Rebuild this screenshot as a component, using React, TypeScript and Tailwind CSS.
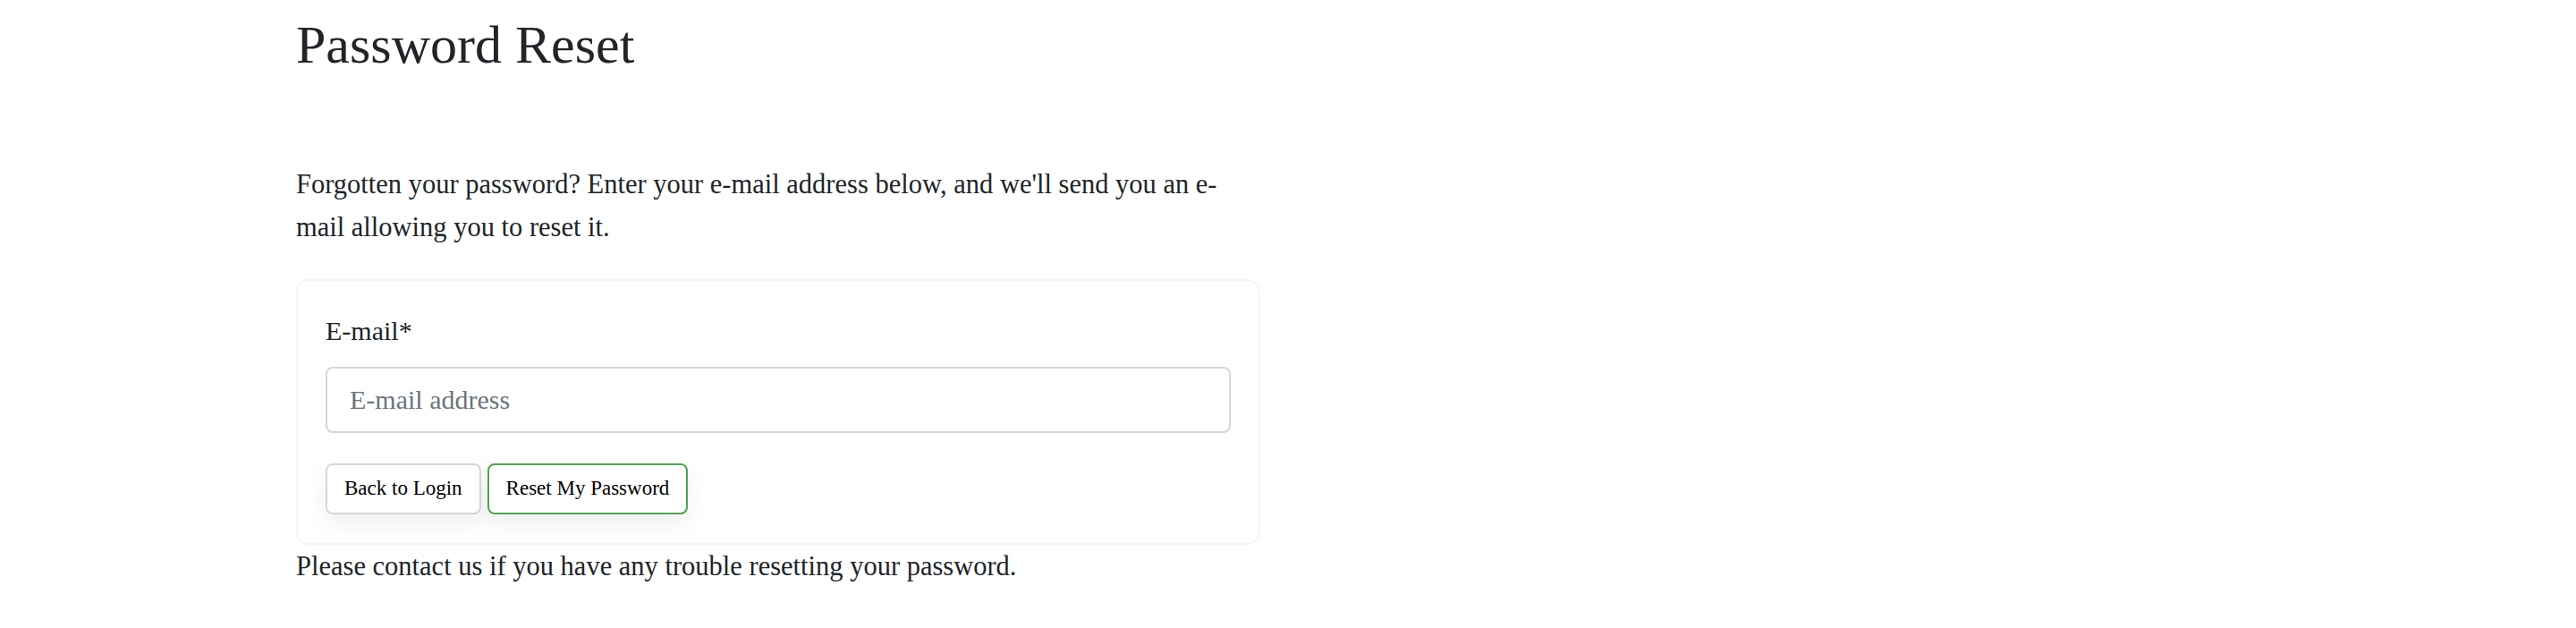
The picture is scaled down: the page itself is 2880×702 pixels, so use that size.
export default function App() {
  return (
    <div className="min-h-screen bg-white text-[#212529] font-['Liberation_Serif',serif]">
      <div className="ml-[331px] w-[1078px] pt-[14px]">
        {/* Header */}
        <h1 className="text-[60px] leading-[72px] font-normal">Password Reset</h1>

        <p className="mt-[96px] text-[30.5px] leading-[48px]">
          Forgotten your password? Enter your e-mail address below, and we'll send you an e-mail allowing you to reset it.
        </p>

        {/* Form card */}
        <form className="mt-[34px] rounded-[14px] border-2 border-[#f5f5f6] px-[31px] pt-[33px] pb-[32px]">
          <label htmlFor="email" className="block text-[30px] leading-[45px]">
            E-mail*
          </label>
          <input
            id="email"
            type="email"
            placeholder="E-mail address"
            className="mt-[18px] block h-[74px] w-full rounded-[8px] border-2 border-[#d3d7db] bg-white px-[25px] text-[30px] outline-none placeholder:text-[#6c757d]"
          />
          <div className="mt-[34px] flex gap-[7px]">
            <button
              type="button"
              className="h-[57px] rounded-[8px] border-2 border-[#d3d7db] bg-white px-[19px] text-[23px] text-black shadow-[0_10px_28px_rgba(0,0,0,0.07)]"
            >
              Back to Login
            </button>
            <button
              type="submit"
              className="h-[57px] rounded-[8px] border-2 border-[#4fa64f] bg-white px-[19px] text-[23px] text-black shadow-[0_10px_28px_rgba(0,0,0,0.07)]"
            >
              Reset My Password
            </button>
          </div>
        </form>

        <p className="text-[30.5px] leading-[48px]">Please contact us if you have any trouble resetting your password.</p>
      </div>
    </div>
  );
}
